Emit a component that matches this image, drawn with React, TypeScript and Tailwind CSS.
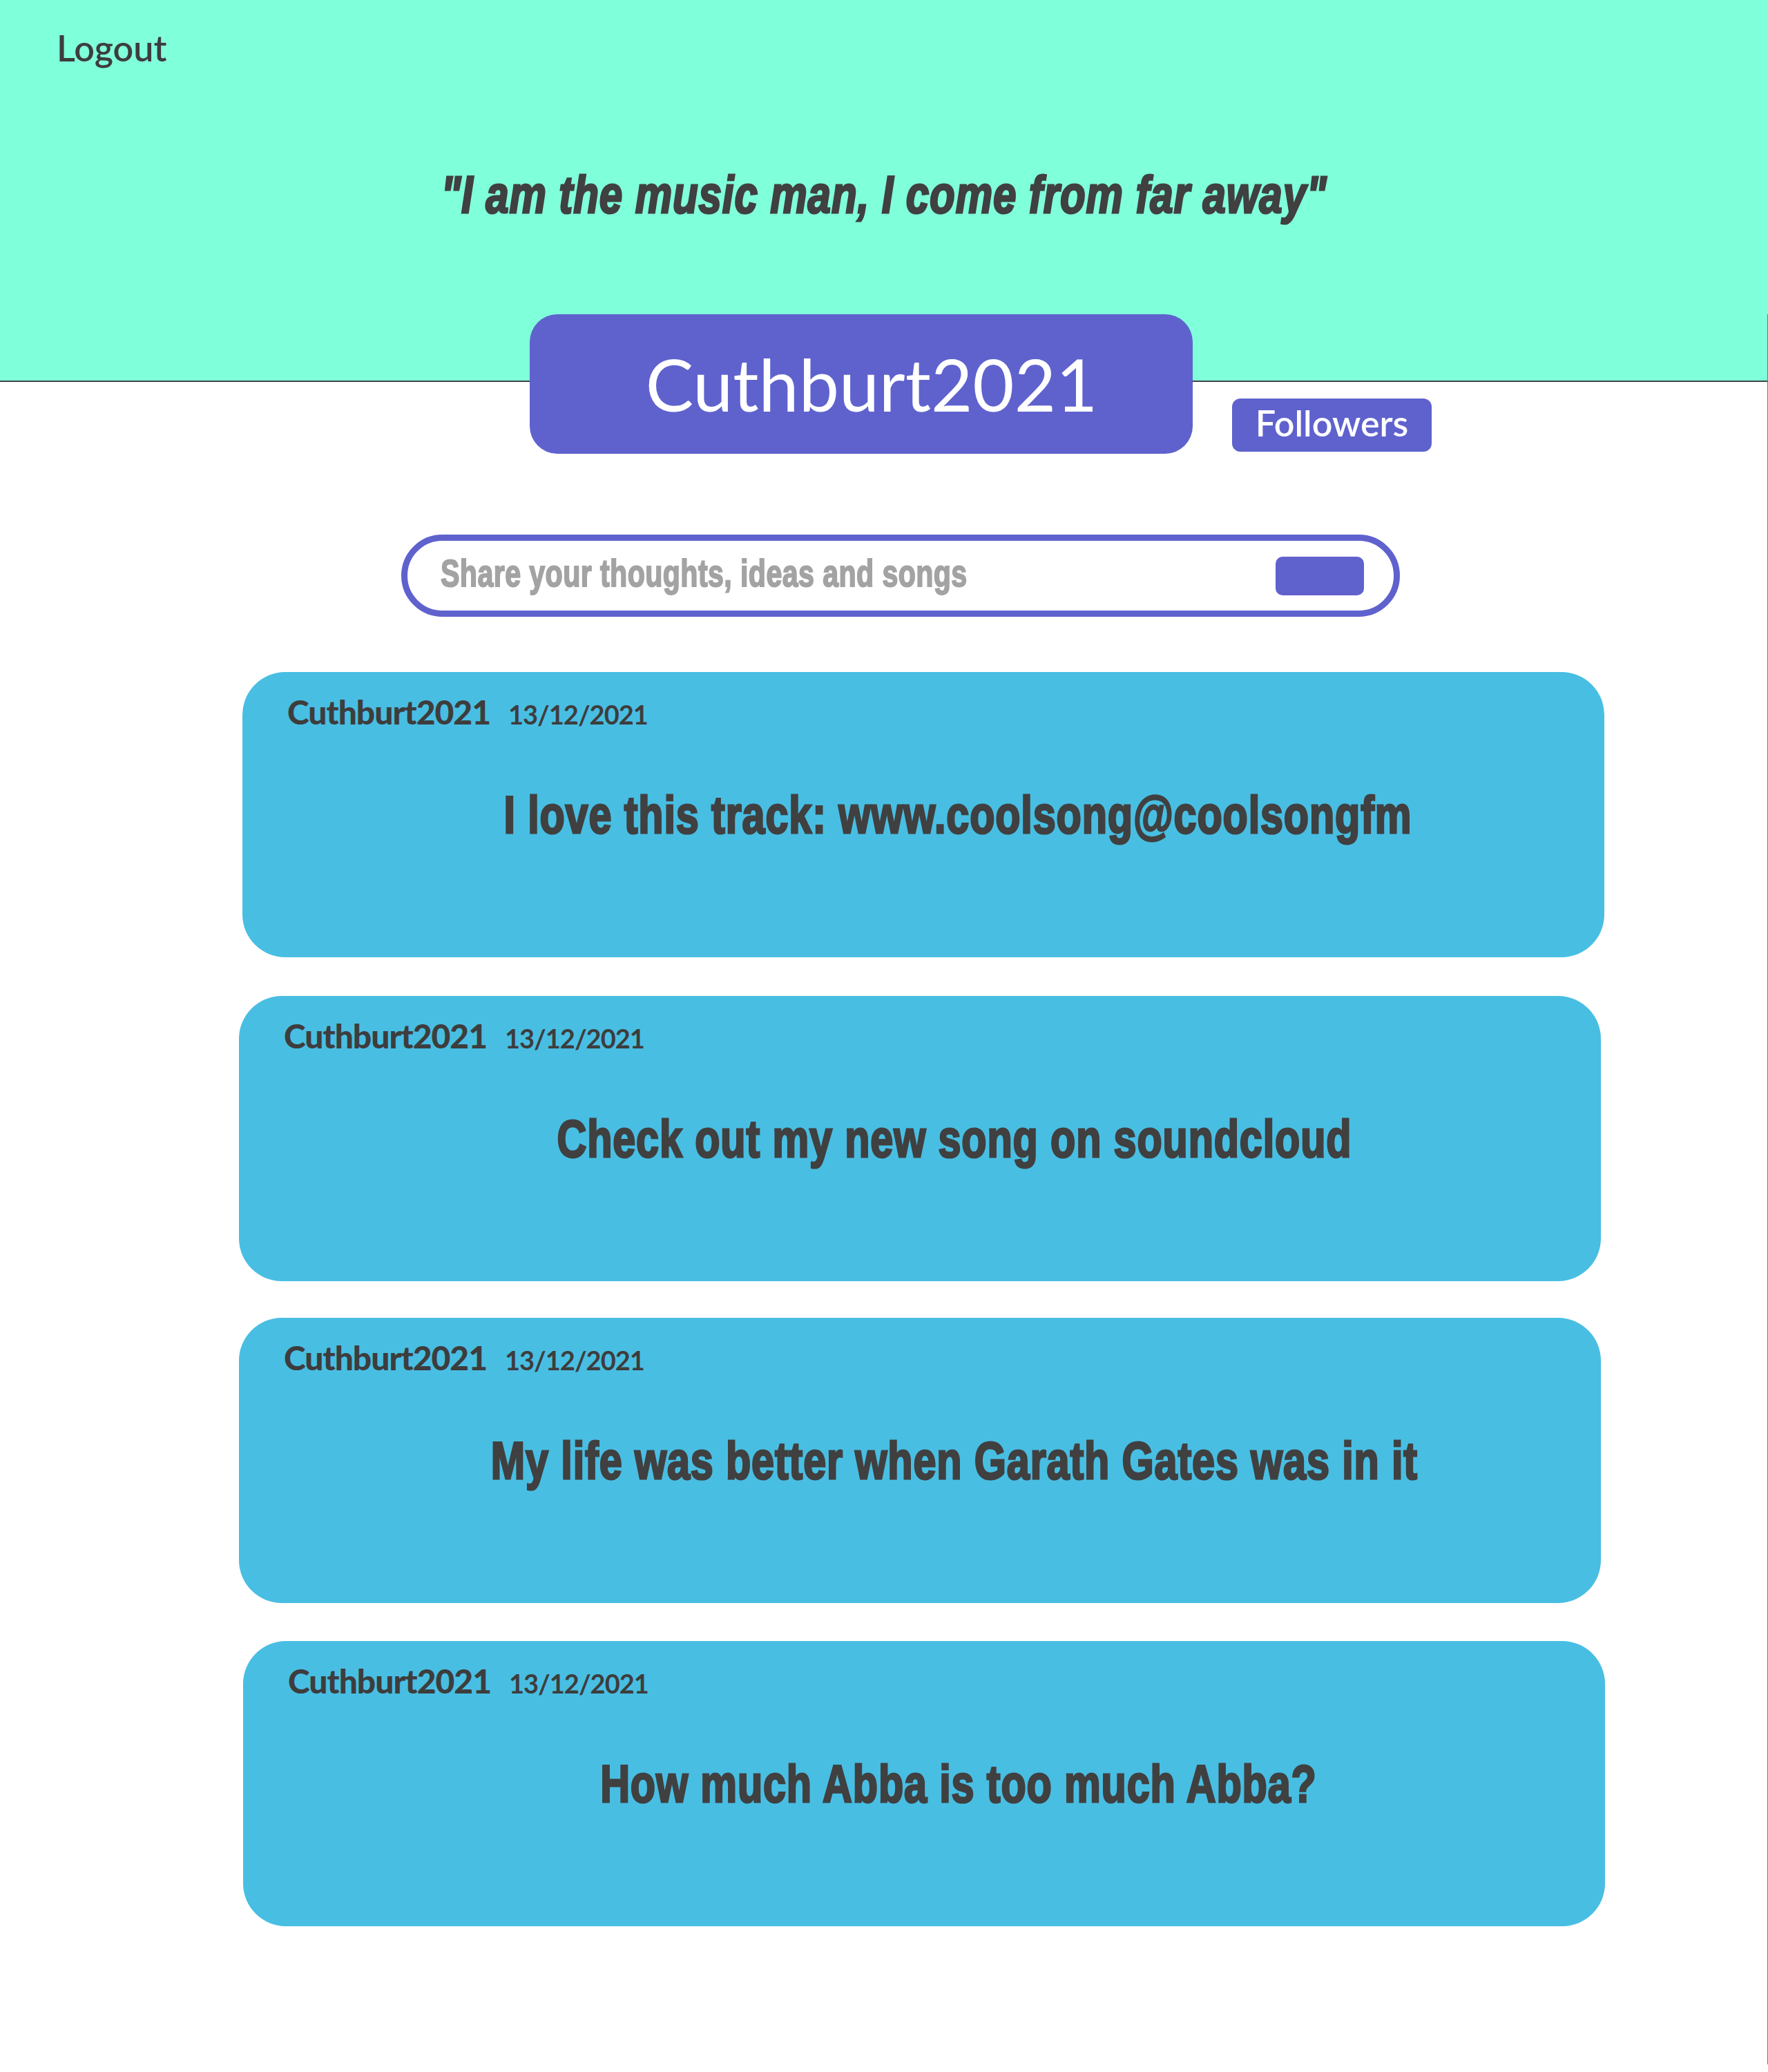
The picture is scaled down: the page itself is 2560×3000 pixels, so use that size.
const posts = [
  { id: 1, user: 'Cuthburt2021', date: '13/12/2021', text: 'I love this track: www.coolsong@coolsongfm', offset: 'ml-[351px] mt-[80px]' },
  { id: 2, user: 'Cuthburt2021', date: '13/12/2021', text: 'Check out my new song on soundcloud', offset: 'ml-[346px] mt-[56px]' },
  { id: 3, user: 'Cuthburt2021', date: '13/12/2021', text: 'My life was better when Garath Gates was in it', offset: 'ml-[346px] mt-[53px]' },
  { id: 4, user: 'Cuthburt2021', date: '13/12/2021', text: 'How much Abba is too much Abba?', offset: 'ml-[352px] mt-[55px]' },
];

// condensed heavy display type (squeezed + stroked Liberation Sans)
const condensed = "font-['Liberation_Sans',Arial,sans-serif] font-bold leading-none whitespace-nowrap origin-center tracking-[0.015em] [-webkit-text-stroke-width:3px]";

function Post({ user, date, text, offset }: { user: string; date: string; text: string; offset: string }) {
  return (
    <article className={`${offset} w-[1972px] h-[413px] rounded-[62px] bg-[#49bee3] pt-[34px]`}>
      <div className="pl-[65px] flex items-baseline gap-[26px] text-[#3d3d3d] font-['Lato',sans-serif] leading-none">
        <span className="text-[48px] font-black tracking-[-1px]">{user}</span>
        <span className="text-[38px] font-bold tracking-[-1px]">{date}</span>
      </div>
      <p className={`mt-[87px] pl-[128px] text-center text-[76px] text-[#404040] scale-x-[0.78] ${condensed}`}>
        {text}
      </p>
    </article>
  );
}

export default function App() {
  return (
    <div className="min-h-[3000px] bg-white">
      <header className="h-[553px] bg-[#80ffdb] border-b-[2px] border-[#444]">
        <div className="pt-[43px] pl-[82px]">
          <button className="text-[52px] leading-none font-semibold text-[#3d3d3d] font-['Lato',sans-serif]">Logout</button>
        </div>
        <h2 className={`mt-[149px] text-center text-[76px] italic text-[#404040] scale-x-[0.79] ${condensed}`}>
          "I am the music man, I come from far away"
        </h2>
      </header>

      <main className="min-h-[2447px] border-r border-[#777] pb-[200px]">
        <div className="-mt-[98px] flex items-end pl-[767px]">
          <div className="w-[960px] h-[202px] rounded-[40px] bg-[#5f62cd] flex items-center justify-center pl-[30px]">
            <h1 className="text-[104px] leading-none text-white font-['Lato',sans-serif]">Cuthburt2021</h1>
          </div>
          <button className="ml-[57px] mb-[3px] pb-[8px] w-[289px] h-[77px] rounded-[12px] bg-[#5f62cd] text-white text-[52px] leading-none font-semibold font-['Lato',sans-serif]">
            Followers
          </button>
        </div>

        <form className="ml-[581px] mt-[117px] w-[1446px] h-[119px] rounded-full border-[9px] border-[#5f62cd] flex items-center pl-[48px] pr-[43px]">
          <div className="flex-1">
            <input
              placeholder="Share your thoughts, ideas and songs"
              className="mb-[8px] w-[1100px] origin-left scale-x-[0.735] bg-transparent outline-none text-[56px] font-bold tracking-[0.01em] text-[#404040] placeholder:text-[#a3a3a3] [-webkit-text-stroke-width:2px] font-['Liberation_Sans',Arial,sans-serif]"
            />
          </div>
          <button type="button" className="w-[128px] h-[56px] rounded-[10px] bg-[#5f62cd]" />
        </form>

        {posts.map((p) => (
          <Post key={p.id} user={p.user} date={p.date} text={p.text} offset={p.offset} />
        ))}
      </main>
    </div>
  );
}
